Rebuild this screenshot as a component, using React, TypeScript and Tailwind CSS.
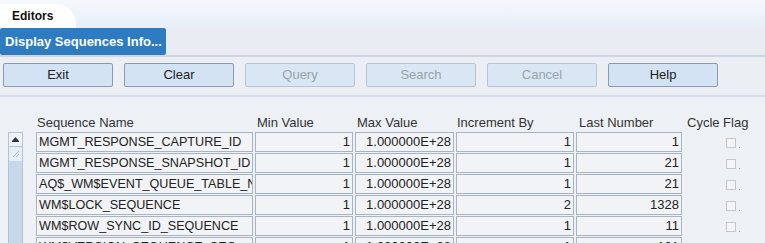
import React from 'react';

const rows = [
  { name: 'MGMT_RESPONSE_CAPTURE_ID', min: '1', max: '1.000000E+28', inc: '1', last: '1' },
  { name: 'MGMT_RESPONSE_SNAPSHOT_ID', min: '1', max: '1.000000E+28', inc: '1', last: '21' },
  { name: 'AQ$_WM$EVENT_QUEUE_TABLE_N', min: '1', max: '1.000000E+28', inc: '1', last: '21' },
  { name: 'WM$LOCK_SEQUENCE', min: '1', max: '1.000000E+28', inc: '2', last: '1328' },
  { name: 'WM$ROW_SYNC_ID_SEQUENCE', min: '1', max: '1.000000E+28', inc: '1', last: '11' },
  { name: 'WM$VERSION_SEQUENCE_SEQ', min: '1', max: '1.000000E+28', inc: '1', last: '101' },
];

const buttons = [
  { label: 'Exit', enabled: true },
  { label: 'Clear', enabled: true },
  { label: 'Query', enabled: false },
  { label: 'Search', enabled: false },
  { label: 'Cancel', enabled: false },
  { label: 'Help', enabled: true },
];

const field = 'h-[20px] border border-[#a9b4c2] bg-[#f1f3f6] px-[2px] leading-[18px] overflow-hidden whitespace-nowrap';

export default function App() {
  return (
    <div className="w-[765px] h-[243px] overflow-hidden bg-[#edf0f5] text-[#222] font-['Liberation_Sans',Arial,sans-serif]">
      {/* Tab strip */}
      <div className="h-[28px] bg-gradient-to-b from-[#f6f9fd] to-[#e6eef8] flex items-end">
        <div className="h-[24px] w-[76px] bg-white rounded-tr-[20px] flex items-center pl-[12px] text-[12px] font-bold text-[#111]">
          Editors
        </div>
      </div>

      {/* Title bar */}
      <div className="h-[29px] bg-[#e9edf3] border-b-2 border-[#cdd6e1] flex items-start">
        <div className="h-[27px] w-[166px] bg-[#2d7cc1] rounded-[2px] flex items-center pl-[5px] text-[13px] font-bold text-white">
          Display Sequences Info...
        </div>
      </div>

      {/* Toolbar */}
      <div className="h-[40px] bg-[#ebeff4] border-b-2 border-[#d3dce7] flex items-start pt-[6px] pl-[3px] gap-[11px]">
        {buttons.map(b => (
          <div
            key={b.label}
            className={`w-[110px] h-[24px] rounded-[2px] border flex items-center justify-center text-[13px] ${
              b.enabled
                ? 'bg-[#d4e3f3] border-[#8b9aae] text-[#222]'
                : 'bg-[#d9e6f3] border-[#b9c4d2] text-[#9aa3ad]'
            }`}
          >
            {b.label}
          </div>
        ))}
      </div>

      {/* Table */}
      <div className="flex pt-[18px]">
        <div className="w-[36px] pl-[8px] pt-[17px]">
          <div className="w-[15px] h-[120px] bg-[#c8d8eb] border border-[#b3c3d6]">
            <div className="h-[14px] bg-[#eef3f9] border-b border-[#b3c3d6] flex items-center justify-center">
              <svg width="7" height="5" viewBox="0 0 7 5">
                <path d="M3.5 0 L7 4 L0 4 Z" fill="#333" />
                <rect x="0" y="4" width="7" height="1" fill="#333" />
              </svg>
            </div>
            <div className="h-[14px] bg-[#e6edf5] flex items-center justify-center">
              <svg width="8" height="8" viewBox="0 0 8 8">
                <path d="M1 7 L7 1 M4 7 L7 4" stroke="#aab6c4" strokeWidth="1" />
              </svg>
            </div>
          </div>
        </div>
        <div className="flex flex-col">
          <div className="flex h-[16px] text-[13px] text-[#333] leading-[16px]">
            <div className="w-[219px] pl-[1px]">Sequence Name</div>
            <div className="w-[100px] pl-[2px]">Min Value</div>
            <div className="w-[101px] pl-[2px]">Max Value</div>
            <div className="w-[122px] pl-[1px]">Increment By</div>
            <div className="w-[109px] pl-[1px]">Last Number</div>
            <div>Cycle Flag</div>
          </div>
          <div className="flex flex-col gap-[1px] mt-[1px] text-[13px]">
            {rows.map((r, i) => (
              <div key={i} className="flex gap-[2px] items-center">
                <div className={`${field} w-[217px] text-[12.6px]`}>{r.name}</div>
                <div className={`${field} w-[98px] text-right`}>{r.min}</div>
                <div className={`${field} w-[99px] text-right`}>{r.max}</div>
                <div className={`${field} w-[118px] text-right`}>{r.inc}</div>
                <div className={`${field} w-[106px] text-right`}>{r.last}</div>
                <div className="w-[60px] flex items-end pl-[42px] h-[20px] pb-[4px]">
                  <div className="w-[10px] h-[10px] border border-[#c3c8cf] bg-[#f3f4f6]" />
                  <div className="w-[1px] h-[1px] bg-[#999] ml-[3px]" />
                </div>
              </div>
            ))}
          </div>
        </div>
      </div>
    </div>
  );
}
